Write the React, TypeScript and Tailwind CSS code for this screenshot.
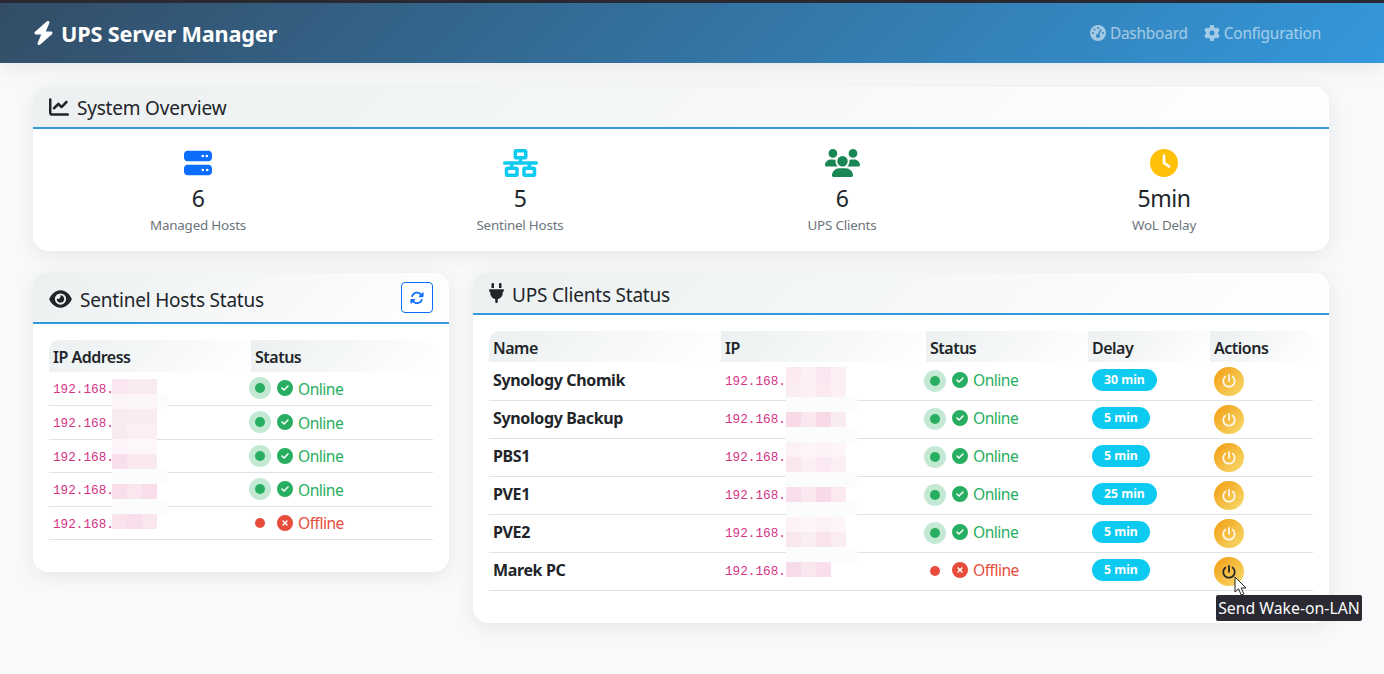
import React from "react";
import { FaBolt, FaChartLine, FaServer, FaNetworkWired, FaUsers, FaClock, FaEye, FaArrowsRotate, FaPlug, FaCircleCheck, FaCircleXmark, FaPowerOff, FaGaugeHigh, FaGear } from "react-icons/fa6";

const sentinel = [
  { online: true }, { online: true }, { online: true }, { online: true }, { online: false },
];
const clients = [
  { name: "Synology Chomik", delay: "30 min", online: true },
  { name: "Synology Backup", delay: "5 min", online: true },
  { name: "PBS1", delay: "5 min", online: true },
  { name: "PVE1", delay: "25 min", online: true },
  { name: "PVE2", delay: "5 min", online: true },
  { name: "Marek PC", delay: "5 min", online: false, hover: true },
];
const stats = [
  { icon: <FaServer className="text-[#0d6efd] w-[28px] h-[28px]" />, value: "6", label: "Managed Hosts" },
  { icon: <FaNetworkWired className="text-[#0dcaf0] w-[35px] h-[28px]" />, value: "5", label: "Sentinel Hosts" },
  { icon: <FaUsers className="text-[#198754] w-[35px] h-[28px]" />, value: "6", label: "UPS Clients" },
  { icon: <FaClock className="text-[#ffc107] w-[28px] h-[28px]" />, value: "5min", label: "WoL Delay" },
];

const F = "#fbfdfd";
type Strip = { x: number; y: number; cells: string[]; faint?: number };
const strips: Strip[] = [
  { x: 112, y: 379, cells: ["#f9e6f0", "#f9e9f1", "#f9e9f1"] },
  { x: 112, y: 394, cells: ["#fdf4f8", "#fcf6f9", "#fcf6f9"], faint: 11 },
  { x: 112, y: 409, cells: ["#f9e9f1", "#faebf3", "#faebf3"] },
  { x: 112, y: 424, cells: ["#f9e9f1", "#fbeef5", "#fbeef5"] },
  { x: 112, y: 439, cells: ["#fdf5f9", "#fdf7fa", "#fdf7fa"] },
  { x: 112, y: 454, cells: ["#f8dfeb", "#f9e8f0", "#f9e8f0"] },
  { x: 112, y: 469, cells: [F, F, F], faint: 11 },
  { x: 112, y: 484, cells: ["#f8dfeb", "#f9e6ef", "#f7deea"] },
  { x: 112, y: 499, cells: [F, F, F], faint: 11 },
  { x: 112, y: 514, cells: ["#f9e4ee", "#f8deea", "#f9e6ef"] },
  { x: 786, y: 367, cells: ["#fbeaf2", "#fcf0f6", "#fae6f0", "#fcf0f6"] },
  { x: 786, y: 382, cells: ["#fbecf3", "#fcf0f6", "#fbe9f2", "#fcf0f6"] },
  { x: 786, y: 397, cells: [F, F, F, F], faint: 11 },
  { x: 786, y: 412, cells: ["#f7d9e7", "#fae8f1", "#f7d9e7", "#faeaf2"] },
  { x: 786, y: 427, cells: [F, F, F, F], faint: 11 },
  { x: 786, y: 442, cells: ["#fcf1f6", "#fdf5f9", "#fcf2f7", "#fdf5f9"] },
  { x: 786, y: 457, cells: ["#f9e8f0", "#fbeef5", "#fae9f2", "#fbeef5"] },
  { x: 786, y: 472, cells: [F, F, F, F], faint: 11 },
  { x: 786, y: 487, cells: ["#f8deea", "#fae8f0", "#f7d9e7", "#fae9f1"] },
  { x: 786, y: 502, cells: [F, F, F, F], faint: 11 },
  { x: 786, y: 517, cells: ["#fcf2f7", "#fdf5f9", "#fcf1f6", "#fdf5f9"] },
  { x: 786, y: 532, cells: ["#f9e7f0", "#fbedf4", "#f9e4ee", "#fbecf4"] },
  { x: 786, y: 547, cells: [F, F, F, F], faint: 11 },
  { x: 786, y: 562, cells: ["#f8dbe9", "#fae6ef", "#f8dfeb"] },
];

function Status({ online, raised }: { online: boolean; raised?: boolean }) {
  return (
    <div className="flex items-center">
      <span className={online ? "w-2.5 h-2.5 rounded-full bg-[#27ae60] shadow-[0_0_0_6px_rgba(39,174,96,0.28)]" : "w-2.5 h-2.5 rounded-full bg-[#e74c3c]"} />
      <span className={online ? "ml-3 flex items-center gap-[5px] text-[#27ae60]" : "ml-3 flex items-center gap-[5px] text-[#e74c3c]"}>
        {online ? <FaCircleCheck size={16} className={raised ? "relative top-[-1px]" : ""} /> : <FaCircleXmark size={16} className={raised ? "relative top-[-1px]" : ""} />}
        <span className={"text-[15.6px] tracking-[-0.5px] relative " + (raised ? "top-0" : "top-[1px]")}>{online ? "Online" : "Offline"}</span>
      </span>
    </div>
  );
}

function Ip({ shift }: { shift: string }) {
  return <code className={"text-[12.7px] tracking-normal text-[#d63384] font-['Liberation_Mono',monospace] relative " + shift}>192.168.</code>;
}

const th = "p-0 pl-1 pt-[2px] text-left font-semibold text-[16px] tracking-[-0.5px] bg-[linear-gradient(135deg,#ecf0f1,#ffffff)]";

export default function App() {
  return (
    <div className="relative min-h-[674px] h-[674px] overflow-hidden bg-[#f8f9fa] text-[#212529] text-[16px] font-['Noto_Sans','Open_Sans',sans-serif] tracking-[-0.36px]">
      <div className="h-[3px] bg-[#2b2a33]" />
      <header className="h-[60px] flex items-center justify-between pt-[1px] pl-[33px] pr-[63px] bg-[linear-gradient(135deg,#334d66,#3498db)] shadow-[0_4px_20px_rgba(0,0,0,0.08)]">
        <div className="flex items-center gap-[7px] text-white font-bold text-[21.7px] tracking-[-0.2px]">
          <FaBolt className="w-[21px] h-[24px]" />
          <span className="relative top-[1px]">UPS Server Manager</span>
        </div>
        <nav className="flex items-center gap-4 text-white/55 text-[15.4px] tracking-[-0.2px]">
          <span className="flex items-center gap-[4px]"><FaGaugeHigh size={16} />Dashboard</span>
          <span className="flex items-center gap-[4px]"><FaGear size={16} />Configuration</span>
        </nav>
      </header>

      <main className="pl-[33px] pr-[55px] pt-6">
        <section className="bg-white rounded-[15px] shadow-[0_4px_20px_rgba(0,0,0,0.08)] overflow-hidden">
          <div className="h-[42px] flex items-center px-4 border-b-2 border-[#3498db] bg-[linear-gradient(135deg,#ecf0f1,#ffffff)] text-[19px] tracking-[-0.2px]">
            <FaChartLine size={20} className="mr-2" />
            <span className="relative top-[1px]">System Overview</span>
          </div>
          <div className="grid grid-cols-4 px-1 h-[122px]">
            {stats.map((s) => (
              <div key={s.label} className="flex flex-col items-center pt-5">
                <div className="h-7 flex items-center justify-center">{s.icon}</div>
                <div className="text-[23px] leading-[32px] mt-[5px] tracking-[-0.5px]">{s.value}</div>
                <div className="text-[13.4px] leading-5 mt-[1px] text-[#6c757d] tracking-[-0.2px]">{s.label}</div>
              </div>
            ))}
          </div>
        </section>

        <div className="flex items-start gap-6 mt-[22px]">
          <section className="w-[416px] shrink-0 bg-white rounded-[15px] shadow-[0_4px_20px_rgba(0,0,0,0.08)] overflow-hidden">
            <div className="h-[51px] flex items-center justify-between px-4 border-b-2 border-[#3498db] bg-[linear-gradient(135deg,#ecf0f1,#ffffff)] text-[19px] tracking-[-0.2px]">
              <span className="flex items-center gap-2"><FaEye className="w-[23px] h-[20px] relative top-[1px]" /><span className="relative top-[3px]">Sentinel Hosts Status</span></span>
              <button className="w-8 h-[31px] flex items-center justify-center rounded-[4px] border border-[#0d6efd] text-[#0d6efd] bg-white"><FaArrowsRotate size={14} /></button>
            </div>
            <div className="p-4 pb-8">
              <table className="w-full table-fixed border-collapse">
                <thead>
                  <tr className="h-[32px]">
                    <th className={th + " w-[202px] rounded-tl-[10px]"}>IP Address</th>
                    <th className={th + " rounded-tr-[10px]"}>Status</th>
                  </tr>
                </thead>
                <tbody>
                  {sentinel.map((r, i) => (
                    <tr key={i} className="h-[33.5px] border-b border-[#dee2e6]">
                      <td className="p-0 pl-1"><Ip shift="top-[-1px]" /></td>
                      <td className="p-0 pl-1"><Status online={r.online} /></td>
                    </tr>
                  ))}
                </tbody>
              </table>
            </div>
          </section>

          <section className="w-[856px] shrink-0 bg-white rounded-[15px] shadow-[0_4px_20px_rgba(0,0,0,0.08)] overflow-hidden">
            <div className="h-[42px] flex items-center gap-2 px-4 border-b-2 border-[#3498db] bg-[linear-gradient(135deg,#ecf0f1,#ffffff)] text-[19px] tracking-[-0.2px]">
              <FaPlug className="w-[15px] h-[20px]" />
              <span className="relative top-[2px]">UPS Clients Status</span>
            </div>
            <div className="p-4 pb-8">
              <table className="w-full table-fixed border-collapse">
                <thead>
                  <tr className="h-[31px]">
                    <th className={th + " w-[232px] rounded-tl-[10px]"}>Name</th>
                    <th className={th + " w-[205px]"}>IP</th>
                    <th className={th + " w-[162px]"}>Status</th>
                    <th className={th + " w-[122px]"}>Delay</th>
                    <th className={th + " rounded-tr-[10px]"}>Actions</th>
                  </tr>
                </thead>
                <tbody>
                  {clients.map((c) => (
                    <tr key={c.name} className="h-[38px] border-b border-[#dee2e6]">
                      <td className="p-0 pl-1 pb-[2px] font-bold">{c.name}</td>
                      <td className="p-0 pl-1"><Ip shift="top-[-2px]" /></td>
                      <td className="p-0 pl-1"><Status online={c.online} raised /></td>
                      <td className="p-0 pl-1 pb-[5px]">
                        <span className="inline-flex items-center justify-center h-[22px] px-[12px] rounded-[11px] bg-[#0dcaf0] text-white text-[12.25px] font-bold tracking-normal">{c.delay}</span>
                      </td>
                      <td className="p-0 pl-1 pt-[1px]">
                        <button className={"w-[30px] h-[29px] flex items-center justify-center rounded-full bg-[linear-gradient(135deg,#f39c12,#f7dc6f)] " + (c.hover ? "text-[#212529]" : "text-white/90")}>
                          <FaPowerOff size={14} />
                        </button>
                      </td>
                    </tr>
                  ))}
                </tbody>
              </table>
            </div>
          </section>
        </div>
      </main>

      {strips.map((s) => (
        <div key={s.x + "-" + s.y} className="absolute flex h-[15px]" style={{ left: s.x, top: s.y }}>
          {s.cells.map((c, i) => <div key={i} className="w-[15px] h-[15px]" style={{ background: c }} />)}
          {s.faint ? <div className="h-[15px] bg-[#fbfdfd]" style={{ width: s.faint }} /> : null}
        </div>
      ))}

      <svg className="absolute left-[1234px] top-[576px]" width="14" height="21" viewBox="0 0 14 21">
        <path d="M1 1 L1 16 L4.6 12.8 L7.2 19 L9.8 17.9 L7.2 12 L12 12 Z" fill="#fff" stroke="#222" strokeWidth="1" />
      </svg>
      <div className="absolute left-[1216px] top-[595px] w-[146px] h-[26px] pt-[1px] flex items-center justify-center rounded-[2px] bg-[#2b2a33] text-[#fbfbfe] text-[15.8px] tracking-normal">Send Wake-on-LAN</div>
    </div>
  );
}
